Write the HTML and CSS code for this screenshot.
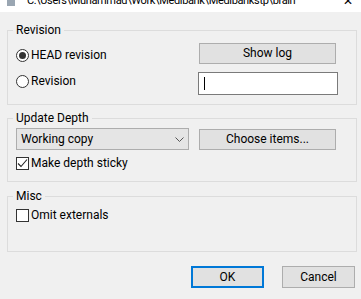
FILE: index.html
```html
<!DOCTYPE html>
<html>
<head>
<meta charset="utf-8">
<link rel="stylesheet" href="styles.css">
</head>
<body>
<div class="titlebar">
  <span class="appicon"></span>
  <span class="title">C:\Users\Muhammad\Work\Medibank\Medibankstp\brain</span>
  <span class="close">✕</span>
</div>
<main class="dialog">
  <fieldset class="group g-rev">
    <legend>Revision</legend>
    <div class="body">
      <div class="left">
        <label class="opt"><span class="radio checked"></span>HEAD revision</label>
        <label class="opt"><span class="radio"></span>Revision</label>
      </div>
      <div class="right">
        <button class="btn">Show log</button>
        <div class="edit"><span class="caret"></span></div>
      </div>
    </div>
  </fieldset>

  <fieldset class="group g-depth">
    <legend>Update Depth</legend>
    <div class="body">
      <div class="row">
        <div class="combo">
          <span>Working copy</span>
          <svg class="chev" width="9" height="5" viewBox="0 0 9 5"><path d="M0.5 0.5 L4.5 4.5 L8.5 0.5" fill="none" stroke="#555" stroke-width="1"/></svg>
        </div>
        <div class="right">
          <button class="btn btn-choose">Choose items...</button>
        </div>
      </div>
      <label class="opt check-row"><span class="check"><svg width="11" height="11" viewBox="0 0 11 11"><path d="M1 5.5 L4 8.5 L10 1.5" fill="none" stroke="#222" stroke-width="1.1"/></svg></span>Make depth sticky</label>
    </div>
  </fieldset>

  <fieldset class="group g-misc">
    <legend>Misc</legend>
    <div class="body">
      <label class="opt"><span class="check"></span>Omit externals</label>
    </div>
  </fieldset>

  <div class="footer">
    <button class="btn btn-foot btn-default">OK</button>
    <button class="btn btn-foot">Cancel</button>
  </div>
</main>
</body>
</html>
```
FILE: styles.css
```css
* { box-sizing: border-box; }

body {
  margin: 0;
  width: 361px;
  height: 299px;
  overflow: hidden;
  background: #f0f0f0;
  font: 12px Roboto, "Noto Sans", sans-serif;
  color: #000;
}

.titlebar {
  height: 12px;
  background: #fff;
  overflow: hidden;
  display: flex;
  align-items: flex-end;
  position: relative;
}

.appicon {
  width: 8px;
  height: 6px;
  margin: 0 0 6px 7px;
  background: #9aa6b2;
  flex: none;
}

.title {
  line-height: 16px;
  margin: 0 0 3px 12px;
  white-space: nowrap;
  font-size: 11px;
  letter-spacing: -0.35px;
}

.close {
  position: absolute;
  right: 8px;
  bottom: 3px;
  line-height: 16px;
  font-size: 12px;
}

.dialog {
  padding: 10px 4px 0 7px;
}

.group {
  margin: 0;
  padding: 0;
  border: 1px solid #dcdcdc;
  min-width: 0;
}

.group legend {
  margin-left: 5px;
  padding: 0 3px;
  line-height: 16px;
}

.g-rev .body {
  display: flex;
  justify-content: space-between;
  padding: 5px 18px 9px 8px;
}

.left {
  display: flex;
  flex-direction: column;
  gap: 11px;
  padding-top: 5px;
}

.opt {
  display: flex;
  align-items: center;
  gap: 2px;
  height: 15px;
  line-height: 15px;
}

.radio {
  width: 13px;
  height: 13px;
  border: 1px solid #333;
  border-radius: 50%;
  background: #fff;
  display: flex;
  align-items: center;
  justify-content: center;
  flex: none;
}

.radio.checked::after {
  content: "";
  width: 7px;
  height: 7px;
  border-radius: 50%;
  background: #333;
}

.check {
  width: 13px;
  height: 13px;
  border: 1px solid #333;
  background: #fff;
  display: flex;
  align-items: center;
  justify-content: center;
  flex: none;
}

.right {
  width: 140px;
  display: flex;
  flex-direction: column;
}

.btn {
  font: inherit;
  color: #000;
  background: #e1e1e1;
  border: 1px solid #adadad;
  padding: 0;
  height: 21px;
  line-height: 19px;
  margin: 0 2px 0 1px;
}

.edit {
  margin-top: 8px;
  height: 23px;
  background: #fff;
  border: 1px solid #7a7a7a;
  display: flex;
  align-items: center;
  padding-left: 5px;
}

.caret {
  width: 1px;
  height: 13px;
  background: #000;
}

.g-depth {
  margin-top: 5px;
}

.g-depth .body {
  padding: 2px 18px 10px 8px;
}

.row {
  display: flex;
  justify-content: space-between;
}

.combo {
  width: 173px;
  height: 22px;
  background: #e5e5e5;
  border: 1px solid #adadad;
  display: flex;
  align-items: center;
  justify-content: space-between;
  padding: 0 4px 0 4px;
}

.btn-choose {
  margin-top: 1px;
}

.check-row {
  margin-top: 6px;
}

.g-misc {
  margin-top: 6px;
}

.g-misc .body {
  padding: 4px 8px 28px 8px;
}

.footer {
  margin-top: 14px;
  display: flex;
  justify-content: flex-end;
  gap: 18px;
  padding-right: 2px;
}

.btn-foot {
  width: 73px;
  height: 22px;
  margin: 0;
  line-height: 20px;
}

.btn-default {
  border: 2px solid #0078d7;
  line-height: 18px;
}
```
